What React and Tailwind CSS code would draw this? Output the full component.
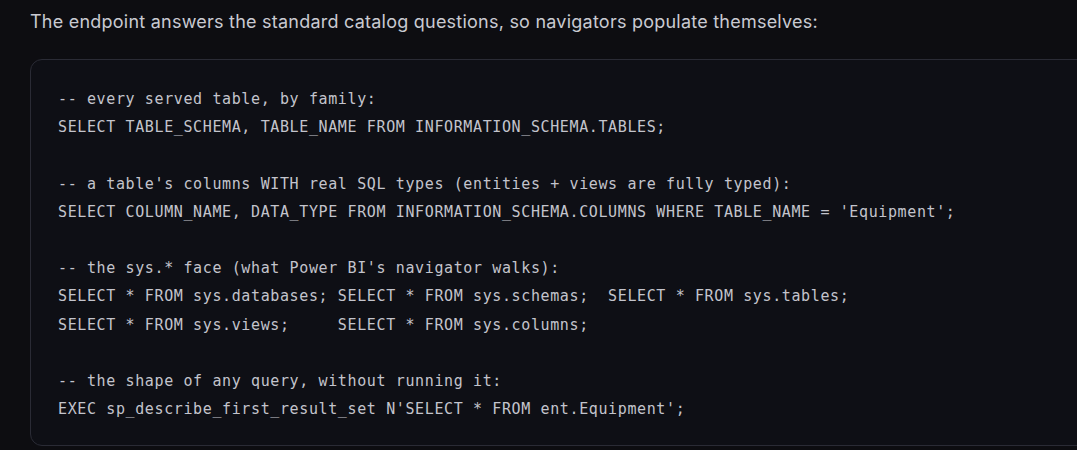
export default function App() {
  const lines = [
    "-- every served table, by family:",
    "SELECT TABLE_SCHEMA, TABLE_NAME FROM INFORMATION_SCHEMA.TABLES;",
    "",
    "-- a table's columns WITH real SQL types (entities + views are fully typed):",
    "SELECT COLUMN_NAME, DATA_TYPE FROM INFORMATION_SCHEMA.COLUMNS WHERE TABLE_NAME = 'Equipment';",
    "",
    "-- the sys.* face (what Power BI's navigator walks):",
    "SELECT * FROM sys.databases; SELECT * FROM sys.schemas;  SELECT * FROM sys.tables;",
    "SELECT * FROM sys.views;     SELECT * FROM sys.columns;",
    "",
    "-- the shape of any query, without running it:",
    "EXEC sp_describe_first_result_set N'SELECT * FROM ent.Equipment';",
  ];
  return (
    <div className="w-[1077px] h-[450px] overflow-hidden bg-[#0d0d11] pl-[30px] pt-[10px]">
      <p className="text-[18px] leading-[24px] text-[#c9cad1] font-['Inter',sans-serif] tracking-[0.23px]">
        The endpoint answers the standard catalog questions, so navigators populate themselves:
      </p>
      <div className="mt-[25px] w-[1100px] rounded-[12px] border border-[#2a2b35] bg-[#0e0f15] pl-[27px] pt-[25px] pb-[22px]">
        <pre className="font-['DejaVu_Sans_Mono',monospace] text-[15px] leading-[28.2px] tracking-[0.62px] text-[#c3c4cc]">
          {lines.map((l, i) => (
            <div key={i} className="h-[28.2px] whitespace-pre">{l}</div>
          ))}
        </pre>
      </div>
    </div>
  );
}
